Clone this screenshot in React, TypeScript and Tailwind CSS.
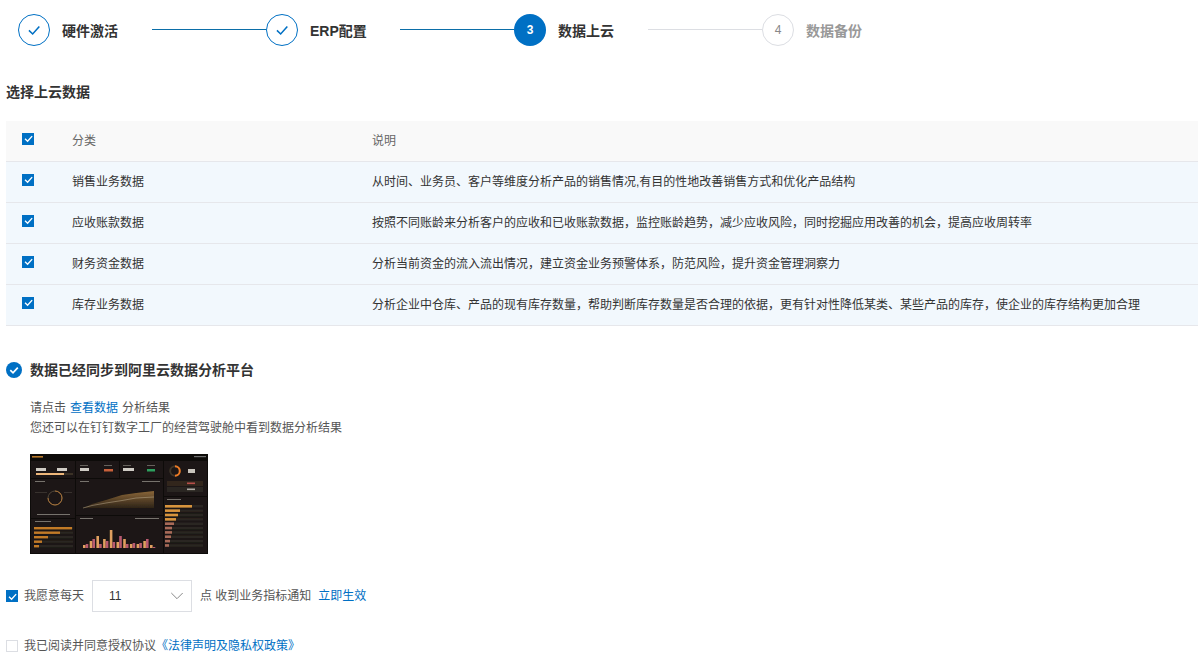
import React from "react";

const FONT = '"Liberation Sans", "Noto Sans CJK SC", sans-serif';

function Tick({ className = "", sw = 1.5 }: { className?: string; sw?: number }) {
  return (
    <svg viewBox="0 0 12 12" className={className} fill="none">
      <path d="M2.2 6.3 L5 9 L10 3.4" stroke="currentColor" strokeWidth={sw} />
    </svg>
  );
}

function Check({ on = true }: { on?: boolean }) {
  return on ? (
    <span className="w-3 h-3 bg-[#0070c4] text-white flex items-center justify-center shrink-0">
      <Tick className="w-[11px] h-[11px]" />
    </span>
  ) : (
    <span className="w-3 h-3 bg-white border border-[#dcdee3] shrink-0" />
  );
}

function Step({ state, n, label, last }: { state: "done" | "active" | "todo"; n: number; label: string; last?: boolean }) {
  const isLineOn = state === "done";
  return (
    <div className="flex w-[248px] shrink-0">
      <div
        className={
          state === "done"
            ? "w-8 h-8 rounded-full border border-[#0070c4] text-[#0070c4] bg-white flex items-center justify-center shrink-0"
            : state === "active"
            ? "w-8 h-8 rounded-full bg-[#0070c4] text-white flex items-center justify-center shrink-0"
            : "w-8 h-8 rounded-full border border-[#dcdee3] text-[#888888] bg-white flex items-center justify-center shrink-0"
        }
      >
        {state === "done" ? (
          <Tick className="w-4 h-4" sw={1.15} />
        ) : (
          <span className={state === "active" ? "text-xs font-bold leading-[28px] -mt-[1px]" : "text-xs leading-[28px] -mt-[1px]"}>{n}</span>
        )}
      </div>
      <div
        className={
          state === "todo"
            ? "ml-3 w-[56px] whitespace-nowrap text-sm font-bold text-[#999999] leading-5 mt-[7px]"
            : "ml-3 w-[56px] whitespace-nowrap text-sm font-bold text-[#333333] leading-5 mt-[7px]"
        }
      >
        {label}
      </div>
      {!last && (
        <div className={isLineOn ? "ml-[34px] w-[114px] h-px mt-[15px] bg-[#0b6ea8]" : "ml-[34px] w-[114px] h-px mt-[15px] bg-[#dcdee3]"} />
      )}
    </div>
  );
}

const rows = [
  ["销售业务数据", "从时间、业务员、客户等维度分析产品的销售情况,有目的性地改善销售方式和优化产品结构"],
  ["应收账款数据", "按照不同账龄来分析客户的应收和已收账款数据，监控账龄趋势，减少应收风险，同时挖掘应用改善的机会，提高应收周转率"],
  ["财务资金数据", "分析当前资金的流入流出情况，建立资金业务预警体系，防范风险，提升资金管理洞察力"],
  ["库存业务数据", "分析企业中仓库、产品的现有库存数量，帮助判断库存数量是否合理的依据，更有针对性降低某类、某些产品的库存，使企业的库存结构更加合理"],
];

function Row({ head, a, b }: { head?: boolean; a: string; b: string }) {
  return (
    <div
      className={
        head
          ? "flex items-center h-[41px] bg-[#f9f9f9] border-b border-[#e6e7eb] text-xs text-[#666666]"
          : "flex items-center h-[41px] bg-[#f2f8fd] border-b border-[#e6e7eb] text-xs text-[#333333]"
      }
    >
      <div className="w-[66px] pl-4 -mt-[5px] shrink-0">
        <Check />
      </div>
      <div className="w-[300px] shrink-0">{a}</div>
      <div className="whitespace-nowrap">{b}</div>
    </div>
  );
}

function Thumb() {
  const bars: number[][] = [
    [3, 4], [7, 9], [12, 4], [9, 7], [18, 6], [6, 12], [9, 4], [4, 5], [4, 5], [7, 9], [3, 1],
  ];
  const side = [27, 15, 13, 11, 9, 7, 7, 6, 5, 4];
  const left = [38, 26, 14, 8, 5];
  const panels = [
    [1, 7, 44, 17], [46, 7, 43, 17], [90, 7, 43, 17], [134, 7, 43, 35],
    [1, 25, 44, 39], [46, 25, 87, 36], [1, 65, 44, 34], [46, 62, 87, 37], [134, 43, 43, 56],
  ];
  return (
    <svg viewBox="0 0 178 100" className="w-[178px] h-[100px] block">
      <defs>
        <filter id="soft" x="0" y="0" width="1" height="1">
          <feGaussianBlur stdDeviation="0.3" />
        </filter>
        <linearGradient id="area" x1="0" y1="0" x2="0" y2="1">
          <stop offset="0" stopColor="#8a6638" />
          <stop offset="1" stopColor="#2e2318" />
        </linearGradient>
      </defs>
      <rect width="178" height="100" fill="#0d0b09" />
      <g filter="url(#soft)">
        <rect x="2" y="2" width="11" height="1.6" fill="#b8782a" />
        <rect x="164" y="2" width="12" height="1.2" fill="#6e6e6e" />
        {panels.map((p, i) => (
          <rect key={i} x={p[0]} y={p[1]} width={p[2]} height={p[3]} fill="#1a1613" />
        ))}
        <rect x="6" y="14" width="10" height="3" fill="#cfcbc4" />
        <rect x="27" y="14" width="10" height="3" fill="#cfcbc4" />
        <rect x="6" y="19" width="37" height="2" fill="#3a3128" />
        <rect x="6" y="19" width="28" height="2" fill="#eeb77a" />
        <rect x="50" y="14" width="9" height="3" fill="#cfcbc4" />
        <rect x="74" y="15" width="9" height="2.5" fill="#c8603a" />
        <rect x="93" y="14" width="11" height="3" fill="#cfcbc4" />
        <rect x="117" y="15" width="8" height="2.5" fill="#2f9f5f" />
        <rect x="74" y="11" width="8" height="1" fill="#66625c" />
        <rect x="117" y="11" width="8" height="1" fill="#66625c" />
        <rect x="50" y="11" width="8" height="1" fill="#66625c" />
        <rect x="93" y="11" width="8" height="1" fill="#66625c" />
        <circle cx="145" cy="17" r="4.8" fill="none" stroke="#3d342a" strokeWidth="2" />
        <path d="M145 12.2 A4.8 4.8 0 0 1 145 21.8" fill="none" stroke="#ee7a25" strokeWidth="2" />
        <rect x="158" y="15" width="7" height="4" fill="#c8c4bc" />
        <rect x="137" y="27" width="36" height="5" fill="#33271f" />
        <rect x="137" y="33" width="36" height="5" fill="#2b2621" />
        <rect x="157" y="28.5" width="8" height="1.6" fill="#b8504a" />
        <rect x="157" y="34.5" width="8" height="1.6" fill="#b0aca6" />
        <rect x="5" y="27" width="10" height="1" fill="#77736d" />
        <circle cx="25" cy="44" r="7" fill="none" stroke="#5f5245" strokeWidth="0.8" />
        <path d="M25 37 A7 7 0 0 1 25 51 A7 7 0 0 1 18 44" fill="none" stroke="#c9853a" strokeWidth="0.8" />
        <rect x="5" y="38" width="12" height="0.5" fill="#55514b" />
        <rect x="34" y="38" width="8" height="0.5" fill="#55514b" />
        <rect x="7" y="60" width="33" height="1" fill="#77736d" />
        <rect x="50" y="27" width="9" height="1" fill="#77736d" />
        <rect x="112" y="27" width="18" height="1" fill="#77736d" />
        <path d="M53 54 L62 50 L76 46 L92 41 L106 39 L124 37 L124 54 Z" fill="url(#area)" />
        <path d="M53 54 L62 51.5 L76 49 L92 46.5 L106 44 L124 43" fill="none" stroke="#bfae90" strokeWidth="0.5" />
        <rect x="50" y="64" width="13" height="1" fill="#77736d" />
        <rect x="105" y="64" width="24" height="1" fill="#77736d" />
        {bars.map((v, i) => (
          <g key={i}>
            <rect x={53 + i * 6.7} y={94 - v[0]} width="2.6" height={v[0]} fill="#e0a060" />
            <rect x={55.7 + i * 6.7} y={94 - v[1]} width="2.6" height={v[1]} fill="#b85a70" />
          </g>
        ))}
        <rect x="5" y="67" width="16" height="1" fill="#77736d" />
        {left.map((w, i) => (
          <g key={i}>
            <rect x="4" y={73 + i * 4.5} width="39" height="2.4" fill="#2a2520" />
            <rect x="4" y={73 + i * 4.5} width={w} height="2.4" fill="#c27a28" />
          </g>
        ))}
        <rect x="137" y="45" width="14" height="1" fill="#77736d" />
        {side.map((w, i) => (
          <g key={i}>
            <rect x="135" y={51 + i * 4.35} width="38" height="2.6" fill="#2a2520" />
            <rect x="135" y={51 + i * 4.35} width={w} height="2.6" fill={i < 4 ? "#d8943c" : "#a86a58"} />
          </g>
        ))}
      </g>
    </svg>
  );
}

export default function App() {
  return (
    <div className="w-[1198px] h-[661px] overflow-hidden bg-white pl-[6px]" style={{ fontFamily: FONT }}>
      <div className="flex pl-3 pt-[14px]">
        <Step state="done" n={1} label="硬件激活" />
        <Step state="done" n={2} label="ERP配置" />
        <Step state="active" n={3} label="数据上云" />
        <Step state="todo" n={4} label="数据备份" last />
      </div>
      <div className="mt-[36px] text-sm font-bold text-[#333333] leading-5">选择上云数据</div>
      <div className="mt-[19px]">
        <Row head a="分类" b="说明" />
        {rows.map((r) => (
          <Row key={r[0]} a={r[0]} b={r[1]} />
        ))}
      </div>
      <div className="flex items-center mt-[34px] h-5">
        <svg viewBox="0 0 16 16" className="w-4 h-4 shrink-0">
          <circle cx="8" cy="8" r="8" fill="#0070c4" />
          <path d="M4.3 8.2 L7 10.8 L11.8 5.6" fill="none" stroke="#fff" strokeWidth="1.7" />
        </svg>
        <span className="ml-2 text-sm font-bold text-[#333333]">数据已经同步到阿里云数据分析平台</span>
      </div>
      <div className="ml-6 mt-[18px] text-xs leading-[20px] text-[#555555]">
        <div className="flex">
          <span>请点击</span>
          <span className="ml-1 text-[#0070c4]">查看数据</span>
          <span className="ml-1">分析结果</span>
        </div>
        <div>您还可以在钉钉数字工厂的经营驾驶舱中看到数据分析结果</div>
      </div>
      <div className="ml-6 mt-4">
        <Thumb />
      </div>
      <div className="flex items-center mt-[26px] h-8 text-xs text-[#555555]">
        <Check />
        <span className="ml-[6px]">我愿意每天</span>
        <div className="ml-2 w-[100px] h-8 border border-[#dcdee3] flex items-center justify-between pl-4 pr-2 text-[#333333]">
          <span>11</span>
          <svg viewBox="0 0 12 12" className="w-3 h-3 text-[#888888]" fill="none">
            <path d="M0.3 3 L6 8.7 L11.7 3" stroke="currentColor" strokeWidth="1" />
          </svg>
        </div>
        <span className="ml-2">点 收到业务指标通知</span>
        <span className="ml-[7px] text-[#0070c4]">立即生效</span>
      </div>
      <div className="flex items-center mt-6 h-5 text-xs text-[#555555]">
        <Check on={false} />
        <span className="ml-[6px]">我已阅读并同意授权协议</span>
        <span className="text-[#0070c4]">《法律声明及隐私权政策》</span>
      </div>
    </div>
  );
}
